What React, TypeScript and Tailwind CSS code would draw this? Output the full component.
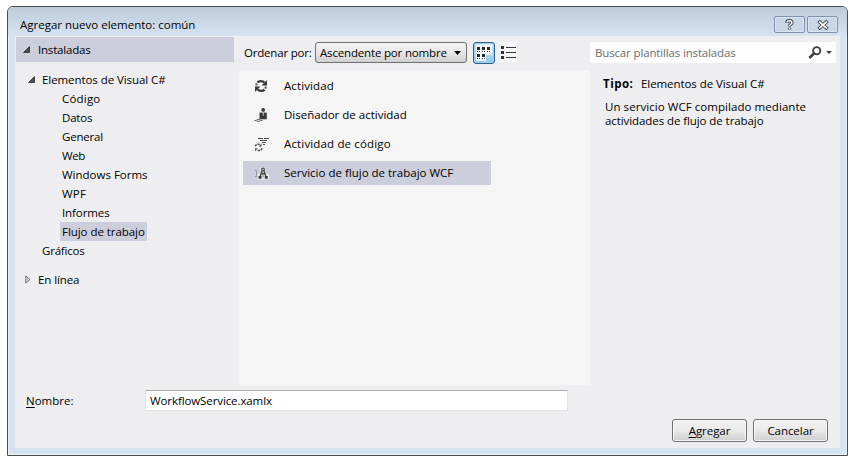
import type { ReactNode } from "react";

const categories: { label: string; tracking: string }[] = [
  { label: "Código", tracking: "tracking-[0.2px]" },
  { label: "Datos", tracking: "tracking-[-0.2px]" },
  { label: "General", tracking: "tracking-[-0.2px]" },
  { label: "Web", tracking: "tracking-[-0.4px]" },
  { label: "Windows Forms", tracking: "tracking-[0px]" },
  { label: "WPF", tracking: "tracking-[0.2px]" },
  { label: "Informes", tracking: "tracking-[-0.1px]" },
];

function Expanded() {
  return (
    <svg width="7" height="7" viewBox="0 0 7 7" className="shrink-0">
      <path d="M6.5 0.5V6.5H0.5Z" fill="#4a4a4a" stroke="#222" strokeWidth="0.7" />
    </svg>
  );
}

function Collapsed() {
  return (
    <svg width="6" height="9" viewBox="0 0 6 9" className="shrink-0">
      <path d="M0.8 0.9L5 4.5L0.8 8.1Z" fill="#d8d8d8" stroke="#6e6e6e" strokeWidth="1" />
    </svg>
  );
}

function ActivityIcon() {
  return (
    <svg width="14" height="14" viewBox="0 0 14 14">
      <g fill="none" stroke="#383838" strokeWidth="2.4">
        <path d="M3.4 3.4A5 4.6 0 0 1 10.4 3.6" />
        <path d="M10.6 10.6A5 4.6 0 0 1 3.6 10.4" />
      </g>
      <path d="M1.4 6.6V4.2H3.4V6.6ZM12.6 7.4V9.8H10.6V7.4Z" fill="#5a5a5a" />
      <path d="M13 1V6.4H7.6ZM1 13V7.6H6.4Z" fill="#383838" />
    </svg>
  );
}

function DesignerIcon() {
  return (
    <svg width="14" height="14" viewBox="0 0 14 14" fill="#383838">
      <circle cx="9.2" cy="1.9" r="1.9" />
      <path d="M5.5 4.6H12.8V11.3H5.5Z" />
      <path d="M8.6 4.6H9.8L9.5 8H8.9Z" fill="#d0d0d0" />
      <path d="M0.5 12.5H2M6.8 12.5H8.5" stroke="#666" />
      <ellipse cx="4.4" cy="12.4" rx="1.9" ry="1.1" fill="none" stroke="#555" />
    </svg>
  );
}

function CodeActivityIcon() {
  return (
    <svg width="15" height="15" viewBox="0 0 15 15" fill="none" stroke="#4a4a4a">
      <path d="M4 1.5H9M10 1.5H15M6 3.5H13M8 5.5H12M9 7.5H11" />
      <path d="M1.2 9.2A3.3 3.3 0 0 1 6 7.7M8 11.2A3.3 3.3 0 0 1 3 13" strokeWidth="1.5" strokeDasharray="2.2 0.7" />
      <path d="M7.6 6.3V9.4H4.7ZM1 14.2V11.2H4Z" fill="#555" stroke="none" />
    </svg>
  );
}

function ServiceIcon() {
  return (
    <svg width="15" height="13" viewBox="0 0 15 13" fill="none">
      <path d="M3.5 12.5V8L6.5 5V0.5H11.5V5L14.8 8V12.5Z" fill="#f0f0f4" />
      <path d="M1 3.5H2.5V9M1 9.5H3" stroke="#9a9aa4" />
      <circle cx="9" cy="2.5" r="1.4" stroke="#444" strokeWidth="1.2" />
      <path d="M8 4L6.3 9M10 4L11.8 9M7 6.8H11" stroke="#444" strokeWidth="1.5" />
      <path d="M4.5 9H7.5V11.7H4.5ZM10.8 9H13.8V11.7H10.8Z" fill="#3c3c3c" />
      <path d="M8.5 8H9.6V10.5H8.5Z" fill="#777" />
    </svg>
  );
}

const templates: { label: string; icon: ReactNode; tracking: string; selected?: boolean }[] = [
  { label: "Actividad", icon: <ActivityIcon />, tracking: "tracking-[0.1px]" },
  { label: "Diseñador de actividad", icon: <DesignerIcon />, tracking: "tracking-[0px]" },
  { label: "Actividad de código", icon: <CodeActivityIcon />, tracking: "tracking-[0.15px]" },
  { label: "Servicio de flujo de trabajo WCF", icon: <ServiceIcon />, tracking: "tracking-[0px]", selected: true },
];

function CaptionButton({ children }: { children: ReactNode }) {
  return (
    <div className="flex h-[17px] w-[31px] items-center justify-center rounded-[2px] border border-[#8290b0] bg-[#c9d7e6] shadow-[inset_0_0_0_1px_#d9e4ef]">
      {children}
    </div>
  );
}

function PushButton({ children }: { children: ReactNode }) {
  return (
    <button className="flex h-[23px] w-[75px] items-center justify-center rounded-[3px] border border-[#707070] bg-linear-to-b from-[#f3f3f3] from-0% via-[#e9e9e9] via-50% to-[#cfcfcf] to-100% tracking-[-0.05px] shadow-[inset_0_0_0_1px_#f8f8f8]">
      <span>{children}</span>
    </button>
  );
}

function Sidebar() {
  return (
    <div className="ml-px w-[218px] pt-px">
      <div className="flex h-[25px] items-center bg-[#cccedb] pl-[7px]">
        <Expanded />
        <span className="ml-[8px] tracking-[-0.2px]">Instaladas</span>
      </div>
      <div className="mt-[8px] flex h-[19px] items-center pl-[12px]">
        <Expanded />
        <span className="ml-[7px] tracking-[-0.07px]">Elementos de Visual C#</span>
      </div>
      {categories.map((c) => (
        <div key={c.label} className={`flex h-[19px] items-center pl-[46px] ${c.tracking}`}>
          {c.label}
        </div>
      ))}
      <div className="ml-[44px] flex h-[19px] w-[87px] items-center bg-[#cccedb] pl-[2px] tracking-[-0.05px]">
        Flujo de trabajo
      </div>
      <div className="flex h-[19px] items-center pl-[26px] tracking-[-0.2px]">Gráficos</div>
      <div className="mt-[10px] flex h-[19px] items-center pl-[9px]">
        <Collapsed />
        <span className="ml-[7px] tracking-[-0.1px]">En línea</span>
      </div>
    </div>
  );
}

function Toolbar() {
  return (
    <div className="flex h-[34px] items-start pt-[6px]">
      <span className="mt-[3px] ml-[5px] w-[71px] tracking-[-0.2px]">Ordenar por:</span>
      <div className="flex h-[21px] w-[152px] items-center justify-between rounded-[3px] border border-[#707070] bg-linear-to-b from-[#f3f3f3] via-[#e8e8e8] to-[#d0d0d0] pr-[5px] pl-[4px]">
        <span className="tracking-[-0.17px]">Ascendente por nombre</span>
        <svg width="7" height="4" viewBox="0 0 7 4" className="shrink-0">
          <path d="M0 0H7L3.5 4Z" fill="#000" />
        </svg>
      </div>
      <div className="ml-[6px] flex h-[22px] w-[22px] items-center justify-center rounded-[3px] border border-[#2c628b] bg-linear-to-b from-[#d5eefb] to-[#8ac8e8] shadow-[inset_0_0_0_1px_#9fd0e8]">
        <svg width="16" height="16" viewBox="0 0 16 16">
          <path d="M0 0H16V10H10V16H0Z" fill="#f4fafd" />
          <path d="M1 2H4V5H1ZM6 2H9V5H6ZM11 2H14V5H11ZM1 9H4V12H1ZM6 9H9V12H6Z" fill="#2a2a2a" />
          <path d="M1 6.5H2M3 6.5H4M6 6.5H7M8 6.5H9M11 6.5H12M13 6.5H14M1 13.5H2M3 13.5H4M6 13.5H7M8 13.5H9" stroke="#444" />
        </svg>
      </div>
      <div className="ml-[4px] flex h-[20px] w-[18px] items-center justify-center bg-[#f7f7f9]">
        <svg width="15" height="13" viewBox="0 0 15 13">
          <path d="M0 0H3V3H0ZM0 5H3V8H0ZM0 10H3V13H0Z" fill="#333" />
          <path d="M5 1.5H15M5 6.5H15M5 11.5H15" stroke="#333" />
        </svg>
      </div>
    </div>
  );
}

function TemplateList() {
  return (
    <div className="flex h-[315px] flex-col gap-[5px] bg-[#f5f5f6] pt-[4px] pl-[4px]">
      {templates.map((t) => (
        <div key={t.label} className={`flex h-[24px] w-[248px] items-center ${t.selected ? "bg-[#cccedb]" : ""}`}>
          <div className="ml-[10px] flex w-[16px] justify-center">{t.icon}</div>
          <span className={`ml-[15px] ${t.tracking}`}>{t.label}</span>
        </div>
      ))}
    </div>
  );
}

function Details() {
  return (
    <div className="w-[246px] pt-[6px]">
      <div className="flex h-[21px] items-center bg-[#fdfdfe] pl-[5px] text-[#6d6d6d]">
        <span className="w-[213px] tracking-[-0.15px]">Buscar plantillas instaladas</span>
        <svg width="14" height="13" viewBox="0 0 14 13" fill="none" stroke="#424242">
          <circle cx="8.7" cy="4.7" r="3.6" strokeWidth="1.9" />
          <path d="M6 7.5L1.3 12" strokeWidth="2.6" />
        </svg>
        <svg width="6" height="3" viewBox="0 0 6 3" className="ml-[4px]">
          <path d="M0 0H6L3 3Z" fill="#424242" />
        </svg>
      </div>
      <div className="mt-[13px] flex h-[16px] items-center pl-[13px]">
        <span className="w-[38px] font-bold tracking-[0.5px]">Tipo:</span>
        <span className="tracking-[-0.07px]">Elementos de Visual C#</span>
      </div>
      <div className="mt-[8px] pl-[15px] leading-[14px]">
        <div className="tracking-[0.06px]">Un servicio WCF compilado mediante</div>
        <div className="tracking-[-0.08px]">actividades de flujo de trabajo</div>
      </div>
    </div>
  );
}

export default function App() {
  return (
    <div className="h-[463px] w-[854px] bg-white pt-[6px] pl-[7px] font-['Open_Sans','Noto_Sans',sans-serif] text-[11.5px] leading-[16px] whitespace-nowrap text-black">
      <div className="h-[450px] w-[841px] rounded-t-[6px] border border-[#4a4d4b] bg-[#d6e4f1] shadow-[inset_0_0_0_1px_#e8f1f8]">
        <div className="flex h-[29px] items-start justify-between rounded-t-[5px] bg-linear-to-b from-[#bccbda] to-[#d6e4f1] pr-[9px] pl-[12px]">
          <span className="mt-[10px]">Agregar nuevo elemento: común</span>
          <div className="mt-[9px] flex gap-[2px]">
            <CaptionButton>
              <svg width="9" height="12" viewBox="0 0 9 12" fill="none">
                <path d="M2 4V2.7Q2.2 1.7 4.5 1.7Q7 1.7 7 3.7Q7 4.7 5.5 5.5Q4.6 6 4.6 7.5M4.6 8.8V10.6" stroke="#454a54" strokeWidth="3.2" />
                <path d="M2 3.6V2.9Q2.4 1.8 4.5 1.8Q6.9 1.8 6.9 3.7Q6.9 4.7 5.5 5.5Q4.6 6 4.6 7.1M4.6 9V10.2" stroke="#fff" strokeWidth="1.4" />
              </svg>
            </CaptionButton>
            <CaptionButton>
              <svg width="12" height="10" viewBox="0 0 12 10" fill="none">
                <path d="M1.5 1L10.5 9M10.5 1L1.5 9" stroke="#454a54" strokeWidth="3.6" />
                <path d="M2.2 1.6L9.8 8.4M9.8 1.6L2.2 8.4" stroke="#fff" strokeWidth="1.8" />
              </svg>
            </CaptionButton>
          </div>
        </div>
        <div className="ml-[7px] flex h-[412px] w-[825px] flex-col bg-[#eeeef0]">
          <div className="flex h-[349px]">
            <Sidebar />
            <div className="ml-[5px] w-[351px]">
              <Toolbar />
              <TemplateList />
            </div>
            <Details />
          </div>
          <div className="mt-[5px] flex h-[21px] items-center pl-[11px]">
            <span className="w-[119px]">
              <span className="underline underline-offset-2">N</span>ombre:
            </span>
            <div className="flex h-[21px] w-[423px] items-center border border-[#e2e3ea] border-t-[#abadb3] bg-white pl-[4px] tracking-[-0.1px]">
              WorkflowService.xamlx
            </div>
          </div>
          <div className="mt-[8px] flex justify-end gap-[6px] pr-[12px]">
            <PushButton>
              <span className="underline underline-offset-2">A</span>gregar
            </PushButton>
            <PushButton>Cancelar</PushButton>
          </div>
        </div>
      </div>
    </div>
  );
}
